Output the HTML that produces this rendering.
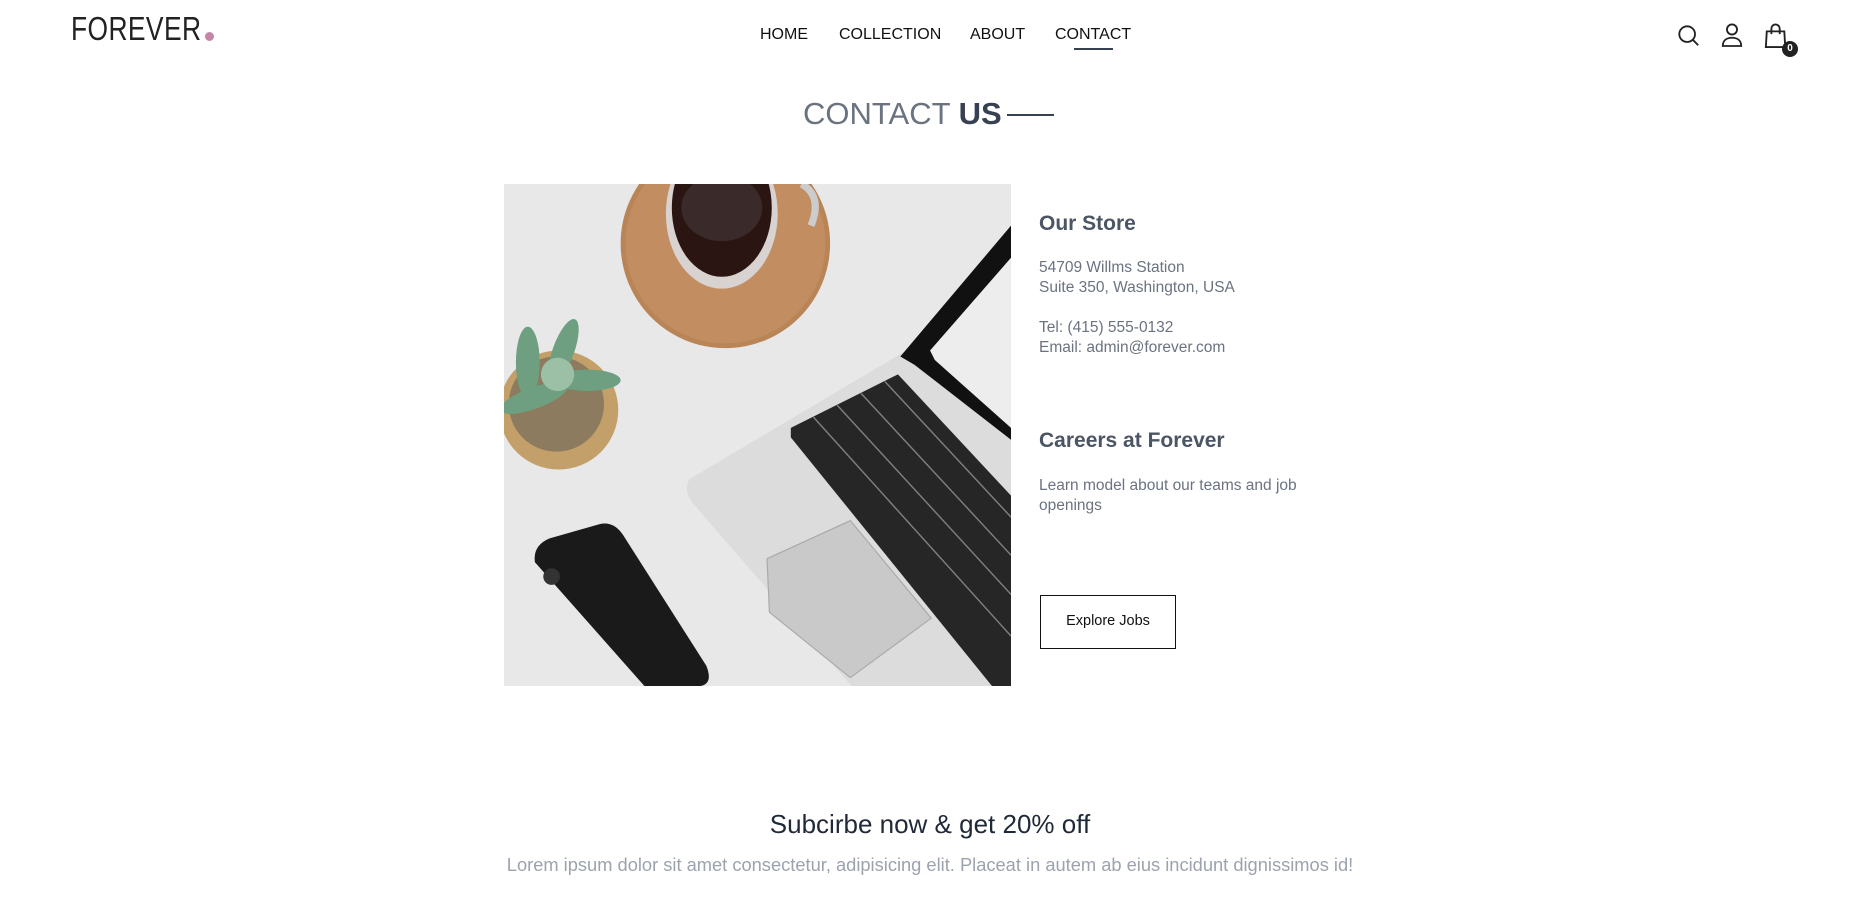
<!DOCTYPE html>
<html><head><meta charset="utf-8">
<style>
*{margin:0;padding:0;box-sizing:border-box}
body{width:1856px;height:921px;background:#fff;font-family:"Liberation Sans",sans-serif;position:relative;overflow:hidden;color:#374151}
.a{position:absolute;white-space:nowrap}
.nav{top:26px;font-size:16px;color:#111}
.t{font-size:15.5px;color:#6b7280;line-height:20px}
.h{font-size:21px;font-weight:bold;color:#4b5563}
</style></head><body>
<div class="a" style="left:71px;top:10px;font-size:33px;letter-spacing:0.5px;color:#222;transform:scaleX(0.8);transform-origin:left">FOREVER</div>
<div class="a" style="left:205px;top:32px;width:9px;height:9px;border-radius:50%;background:#c586a5"></div>
<div class="a nav" style="left:760px">HOME</div>
<div class="a nav" style="left:839px">COLLECTION</div>
<div class="a nav" style="left:970px">ABOUT</div>
<div class="a nav" style="left:1055px">CONTACT</div>
<div class="a" style="left:1074px;top:48px;width:39px;height:2px;background:#374151"></div>
<svg class="a" style="left:1677px;top:24px" width="24" height="24" viewBox="0 0 26 26" fill="none" stroke="#222" stroke-width="2"><circle cx="11" cy="11" r="8.5"/><path d="M17 17l6 6"/></svg>
<svg class="a" style="left:1721px;top:22px" width="22" height="26" viewBox="0 0 24 28" fill="none" stroke="#222" stroke-width="2"><circle cx="12" cy="8" r="5.5"/><path d="M2 26c0-6 4-9 10-9s10 3 10 9z"/></svg>
<svg class="a" style="left:1764px;top:23px" width="24" height="26" viewBox="0 0 26 28" fill="none" stroke="#222" stroke-width="2"><path d="M3 9h19l1 17H2z"/><path d="M8 12V6a4.5 4.5 0 019 0v6"/></svg>
<div class="a" style="left:1782px;top:41px;width:16px;height:16px;border-radius:50%;background:#222;color:#fff;font-size:10px;font-weight:bold;text-align:center;line-height:16px">0</div>

<div class="a" style="left:803px;top:96px;font-size:31px;color:#6b7280">CONTACT <span style="color:#374151;font-weight:bold">US</span></div>
<div class="a" style="left:1007px;top:114px;width:47px;height:2px;background:#374151"></div>

<svg class="a" style="left:504px;top:184px" width="507" height="502" viewBox="0 0 426 422" preserveAspectRatio="none">
<rect width="426" height="422" fill="#e8e8e8"/>
<circle cx="186" cy="50" r="88" fill="#b98456"/>
<circle cx="186" cy="50" r="84" fill="#c28d60"/>
<path d="M250 0 Q268 10 258 35" stroke="#ccc" stroke-width="6" fill="none"/>
<ellipse cx="183" cy="25" rx="47" ry="63" fill="#d8d2d0"/>
<ellipse cx="183" cy="20" rx="42" ry="58" fill="#2b1512"/>
<ellipse cx="183" cy="20" rx="34" ry="28" fill="#3a2a2a"/>
<circle cx="46" cy="190" r="50" fill="#c3a06a"/>
<circle cx="44" cy="185" r="40" fill="#8c7b5e"/>
<g fill="#6e9f80"><ellipse cx="20" cy="150" rx="10" ry="30"/><ellipse cx="50" cy="140" rx="9" ry="28" transform="rotate(20 50 140)"/><ellipse cx="70" cy="165" rx="28" ry="9"/><ellipse cx="25" cy="180" rx="30" ry="9" transform="rotate(-20 25 180)"/><ellipse cx="45" cy="160" rx="14" ry="14" fill="#9cc0a6"/></g>
<path d="M26 318 Q24 304 38 298 L80 286 Q92 283 100 295 L170 405 Q176 420 165 422 L118 422 Z" fill="#1a1a1a"/>
<circle cx="40" cy="330" r="7" fill="#333"/>
<path d="M156 248 L338 140 L426 128 L426 422 L292 422 L160 270 Q150 258 156 248Z" fill="#dcdcdc"/>
<path d="M333 145 L426 35 L426 215 L345 152Z" fill="#111"/>
<path d="M358 140 L426 62 L426 205 L362 148Z" fill="#ededed"/>
<path d="M241 205 L331 160 L426 262 L426 422 L410 422 L241 213 Z" fill="#262626"/>
<g stroke="#bbb" stroke-width="1.2" opacity="0.6"><path d="M260 196 L426 380"/><path d="M280 186 L426 345"/><path d="M300 176 L426 312"/><path d="M320 166 L426 280"/></g>
<path d="M221 315 L291 283 L359 365 L291 415 L223 360Z" fill="#c9c9c9" stroke="#aaa"/>
</svg>

<div class="a h" style="left:1039px;top:212px">Our Store</div>
<div class="a t" style="left:1039px;top:258px">54709 Willms Station</div>
<div class="a t" style="left:1039px;top:278px">Suite 350, Washington, USA</div>
<div class="a t" style="left:1039px;top:318px">Tel: (415) 555-0132</div>
<div class="a t" style="left:1039px;top:338px">Email: admin@forever.com</div>
<div class="a h" style="left:1039px;top:429px">Careers at Forever</div>
<div class="a t" style="left:1039px;top:476px">Learn model about our teams and job</div>
<div class="a t" style="left:1039px;top:496px">openings</div>
<div class="a" style="left:1040px;top:595px;width:136px;height:54px;border:1.5px solid #111;font-size:14.5px;color:#111;text-align:center;line-height:51px">Explore Jobs</div>

<div class="a" style="left:0;width:1860px;text-align:center;top:809px;font-size:26px;color:#1f2937">Subcirbe now &amp; get 20% off</div>
<div class="a" style="left:0;width:1860px;text-align:center;top:854px;font-size:18.3px;color:#9ca3af">Lorem ipsum dolor sit amet consectetur, adipisicing elit. Placeat in autem ab eius incidunt dignissimos id!</div>
</body></html>
